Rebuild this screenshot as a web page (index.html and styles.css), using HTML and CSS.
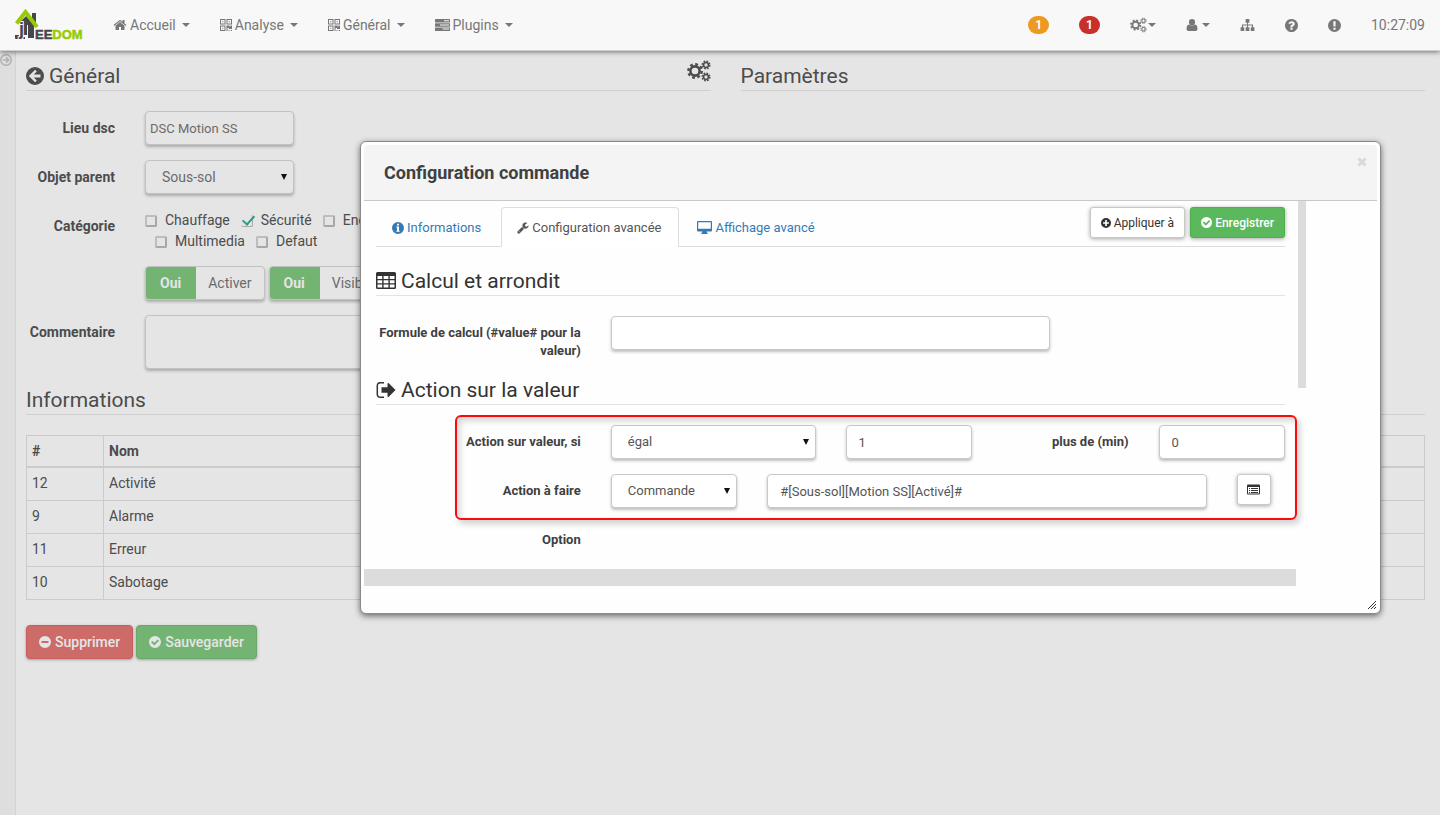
FILE: index.html
```html
<!DOCTYPE html>
<html lang="fr">
<head>
<meta charset="utf-8">
<title>Jeedom</title>
<link rel="stylesheet" href="styles.css">
</head>
<body>
<svg class="sprite" aria-hidden="true">
  <symbol id="home" viewBox="0 0 1792 1792"><path d="M1472 992v480q0 26-19 45t-45 19h-384v-384h-256v384h-384q-26 0-45-19t-19-45v-480q0-1 .5-3t.5-3l575-474 575 474q1 2 1 6zm223-69l-62 74q-8 9-21 11h-3q-13 0-21-7l-692-577-692 577q-12 8-24 7-13-2-21-11l-62-74q-8-10-7-23.500t11-21.500l719-599q32-26 76-26t76 26l244 204v-195q0-14 9-23t23-9h192q14 0 23 9t9 23v408l219 182q10 8 11 21.500t-7 23.500z"/></symbol>
  <symbol id="qrcode" viewBox="0 0 12 12"><path fill-rule="evenodd" d="M0 0h5.500v5.500H0zM1 1v3.500h3.500V1zM6.500 0H12v5.500H6.500zM7.500 1v3.500H11V1zM0 6.500h5.500V12H0zM1 7.500V11h3.500V7.500zM2.200 2.200h1.100v1.100H2.200zM8.700 2.200h1.100v1.100H8.700zM2.200 8.700h1.100v1.100H2.200zM6.500 6.500h3v1h1v-1H12v3.500H9v-1H7.500v3h-1zM8.500 11h1v1h-1zM10.800 11H12v1h-1.200z"/></symbol>
  <symbol id="server" viewBox="0 0 15 12"><path fill-rule="evenodd" d="M.5 0h14q.5 0 .5.500v2.500q0 .5-.5.500H.5Q0 3.500 0 3V.5Q0 0 .5 0zM9 1.200v1h5v-1zM.5 4.200h14q.5 0 .5.500v2.500q0 .5-.5.500H.5Q0 7.700 0 7.200V4.700q0-.5.500-.5zM5 5.400v1h9v-1zM.5 8.400h14q.5 0 .5.500v2.500q0 .5-.5.500H.5Q0 11.900 0 11.400V8.900q0-.5.500-.5zM7.500 9.600v1H14v-1z"/></symbol>
  <symbol id="cogs" viewBox="0 0 24 22"><g fill="none" stroke="currentColor"><circle cx="8" cy="11" r="4.600" stroke-width="2.600"/><circle cx="8" cy="11" r="6.700" stroke-width="2.400" stroke-dasharray="2.800 2.462"/><circle cx="19" cy="5" r="2.400" stroke-width="1.500"/><circle cx="19" cy="5" r="3.800" stroke-width="1.400" stroke-dasharray="1.700 1.284"/><circle cx="19" cy="17" r="2.400" stroke-width="1.500"/><circle cx="19" cy="17" r="3.800" stroke-width="1.400" stroke-dasharray="1.700 1.284"/></g></symbol>
  <symbol id="user" viewBox="0 0 11 12"><path d="M5.500 0a3 3 0 0 1 3 3.200a3 3.300 0 0 1-6 0A3 3 0 0 1 5.500 0zM2.500 5.600q3 2.400 6 0Q11 6 11 10q0 2-2 2H2q-2 0-2-2 0-4 2.500-4.400z"/></symbol>
  <symbol id="sitemap" viewBox="0 0 15 13"><path d="M5.500 0h4v4H8v2h5.500v3H15v4h-4V9h1.300V7H8v2h1.500v4h-4V9H7V7H2.700v2H4v4H0V9h1.500V6H7V4H5.500z"/></symbol>
  <symbol id="question" viewBox="128 128 1536 1536"><path d="M1024 1376v-192q0-14-9-23t-23-9h-192q-14 0-23 9t-9 23v192q0 14 9 23t23 9h192q14 0 23-9t9-23zm256-672q0-88-55.500-163t-138.500-116-170-41q-243 0-371 213-15 24 8 42l132 100q7 6 19 6 16 0 25-12 53-68 86-92 34-24 86-24 48 0 85.500 26t37.500 59q0 38-20 61t-68 45q-63 28-115.500 86.500t-52.500 125.500v36q0 14 9 23t23 9h192q14 0 23-9t9-23q0-19 21.500-49.500t54.500-49.500q32-18 49-28.500t46-35 44.500-48 28-60.500 12.500-81zm384 192q0 209-103 385.500t-279.500 279.500-385.500 103-385.500-103-279.500-279.500-103-385.500 103-385.500 279.500-279.500 385.500-103 385.500 103 279.500 279.500 103 385.500z"/></symbol>
  <symbol id="exclamation" viewBox="0 0 12 12"><path fill-rule="evenodd" d="M6 0a6 6 0 1 1 0 12A6 6 0 0 1 6 0zM4.900 2l.2 5h1.800l.2-5zM5 8v2h2V8z"/></symbol>
  <symbol id="info" viewBox="0 0 12 12"><path fill-rule="evenodd" d="M6 0a6 6 0 1 1 0 12A6 6 0 0 1 6 0zM5 1.700v1.700h2V1.700zM4.300 4.500v1.100H5v3.100h-.7v1.100h3.400V8.700H7V4.500z"/></symbol>
  <symbol id="back" viewBox="0 0 18 18"><path fill-rule="evenodd" d="M9 0a9 9 0 1 1 0 18A9 9 0 0 1 9 0zM2.800 9l6.300 6.300 1.700-1.700-3-3h6.700V7.400H7.800l3-3-1.700-1.700z"/></symbol>
  <symbol id="forward" viewBox="0 0 12 12"><g fill="none" stroke="currentColor" stroke-width="1.500"><circle cx="6" cy="6" r="5.200"/><path d="M2.800 6h5.500M6 3.300L8.700 6 6 8.700"/></g></symbol>
  <symbol id="plus" viewBox="0 0 12 12"><path fill-rule="evenodd" d="M6 0a6 6 0 1 1 0 12A6 6 0 0 1 6 0zM5 2.500V5H2.500v2H5v2.500h2V7h2.500V5H7V2.500z"/></symbol>
  <symbol id="minus" viewBox="0 0 12 12"><path fill-rule="evenodd" d="M6 0a6 6 0 1 1 0 12A6 6 0 0 1 6 0zM2.500 5v2h7V5z"/></symbol>
  <symbol id="check" viewBox="0 0 12 12"><path fill-rule="evenodd" d="M6 0a6 6 0 1 1 0 12A6 6 0 0 1 6 0zM2 6.200l3.300 3.300L10 4.700 8.700 3.400 5.300 6.800 3.300 4.900z"/></symbol>
  <symbol id="wrench" viewBox="64 64 1700 1728"><path d="M448 1472q0-26-19-45t-45-19-45 19-19 45 19 45 45 19 45-19 19-45zm644-420l-682 682q-37 37-90 37-52 0-91-37l-106-108q-38-36-38-90 0-53 38-91l681-681q39 98 114.500 173.500t173.500 114.500zm634-435q0 39-23 106-47 134-164.500 217.500t-258.500 83.500q-185 0-316.500-131.500t-131.500-316.500 131.500-316.500 316.500-131.500q58 0 121.500 16.500t107.500 46.500q16 11 16 28t-16 28l-293 169v224l193 107q5-3 79-48.500t135.500-81 70.500-35.500q15 0 23.500 10t8.500 25z"/></symbol>
  <symbol id="desktop" viewBox="0 0 15 13"><path fill-rule="evenodd" d="M1 0h13q1 0 1 1v8.500q0 1-1 1H9.500l.5 1.200h.7V13H4.300v-1.300H5l.5-1.200H1q-1 0-1-1V1q0-1 1-1zM1.200 1.200v6.600h12.600V1.200z"/></symbol>
  <symbol id="table" viewBox="0 0 20 18"><path fill-rule="evenodd" d="M1.500 0h17Q20 0 20 1.500v14q0 1.500-1.500 1.500h-17Q0 17 0 15.500v-14Q0 0 1.500 0zM1.500 4v3h4.700V4zM7.600 4v3h4.800V4zM13.800 4v3h4.700V4zM1.500 8.300v2.900h4.700V8.300zM7.600 8.300v2.900h4.800V8.300zM13.800 8.300v2.900h4.700V8.300zM1.500 12.500v3h4.700v-3zM7.600 12.500v3h4.800v-3zM13.800 12.500v3h4.700v-3z"/></symbol>
  <symbol id="signout" viewBox="0 0 19 16"><path d="M7.500.7H4Q.8.700.8 4v8q0 3.300 3.200 3.300h3.500" fill="none" stroke="currentColor" stroke-width="1.500"/><path d="M5 5.200h6V1.500q.5-.8 1.300-.2L19 8l-6.700 6.700q-.8.600-1.300-.2v-3.700H5z"/></symbol>
  <symbol id="listalt" viewBox="0 0 13 11"><path fill-rule="evenodd" d="M1 .5h11q1 0 1 1v8q0 1-1 1H1q-1 0-1-1v-8q0-1 1-1zM1 3v6.500h11V3z"/><path d="M2 4h1v1H2zM4 4h7v1H4zM2 6h1v1H2zM4 6h7v1H4zM2 8h1v1H2zM4 8h7v1H4z"/></symbol>
</svg>

<header class="navbar">
  <a class="brand" href="#" aria-label="Jeedom">
    <svg width="70" height="34" viewBox="0 0 70 34">
      <path d="M17 4h4v11h-4z" fill="#46464d"/>
      <path d="M5 13l6-6 8 8v14h-6V16h-1v10H5z" fill="#46464d"/>
      <path d="M0 26h4v2h6v2H1q-1 0-1-1z" fill="#46464d"/>
      <text class="logo-text logo-j" x="4" y="26">j</text>
      <path d="M1.500 14.500L10.500 3 22 18" fill="none" stroke="#96cb05" stroke-width="4"/>
      <text class="logo-text" x="20" y="30">EE<tspan class="logo-green">DOM</tspan></text>
    </svg>
  </a>
  <nav class="menu">
    <a href="#"><svg width="14" height="14"><use href="#home"/></svg> Accueil <i class="caret"></i></a>
    <a href="#"><svg width="12" height="12"><use href="#qrcode"/></svg> Analyse <i class="caret"></i></a>
    <a href="#"><svg width="12" height="12"><use href="#qrcode"/></svg> Général <i class="caret"></i></a>
    <a href="#"><svg width="15" height="12"><use href="#server"/></svg> Plugins <i class="caret"></i></a>
  </nav>
  <nav class="menu menu-right">
    <a href="#"><span class="badge badge-orange">1</span></a>
    <a href="#"><span class="badge badge-red">1</span></a>
    <a href="#" class="tight" aria-label="Réglages"><svg width="17" height="16"><use href="#cogs"/></svg><i class="caret"></i></a>
    <a href="#" aria-label="Utilisateur"><svg width="12" height="12"><use href="#user"/></svg><i class="caret"></i></a>
    <a href="#" aria-label="Plan"><svg width="15" height="12"><use href="#sitemap"/></svg></a>
    <a href="#" aria-label="Aide"><svg width="13" height="13"><use href="#question"/></svg></a>
    <a href="#" aria-label="Alerte"><svg width="13" height="13"><use href="#exclamation"/></svg></a>
    <a href="#">10:27:09</a>
  </nav>
</header>

<div class="shell">
  <aside class="rail"><svg width="12" height="12"><use href="#forward"/></svg></aside>
  <main class="page">
    <div class="columns">
      <section>
        <h2 class="legend"><svg width="18" height="18"><use href="#back"/></svg>Général<svg class="legend-cogs" width="24" height="22"><use href="#cogs"/></svg></h2>
        <form class="equip">
          <label for="lieu">Lieu dsc</label>
          <input class="field field-name" id="lieu" type="text" value="DSC Motion SS">
          <label for="parent">Objet parent</label>
          <span class="select select-parent"><select class="field" id="parent"><option>Sous-sol</option></select></span>
          <span class="form-label">Catégorie</span>
          <div class="cats">
            <div class="cat-row">
              <label><input type="checkbox">Chauffage</label>
              <label><input type="checkbox" checked>Sécurité</label>
              <label><input type="checkbox">Energie</label>
            </div>
            <div class="cat-row cat-next">
              <label><input type="checkbox">Multimedia</label>
              <label><input type="checkbox">Defaut</label>
            </div>
          </div>
          <div class="toggles">
            <button type="button" class="toggle"><b>Oui</b><span>Activer</span></button>
            <button type="button" class="toggle"><b>Oui</b><span>Visible</span></button>
          </div>
          <label for="comment">Commentaire</label>
          <textarea class="field" id="comment"></textarea>
        </form>
      </section>
      <section>
        <h2 class="legend">Paramètres</h2>
      </section>
    </div>
    <h2 class="legend">Informations</h2>
    <table class="cmds">
      <thead><tr><th class="num">#</th><th>Nom</th></tr></thead>
      <tbody>
        <tr><td>12</td><td>Activité</td></tr>
        <tr><td>9</td><td>Alarme</td></tr>
        <tr><td>11</td><td>Erreur</td></tr>
        <tr><td>10</td><td>Sabotage</td></tr>
      </tbody>
    </table>
    <div class="actions">
      <button type="button" class="btn btn-danger"><svg width="12" height="12"><use href="#minus"/></svg>Supprimer</button>
      <button type="button" class="btn btn-save"><svg width="12" height="12"><use href="#check"/></svg>Sauvegarder</button>
    </div>
  </main>
</div>

<div class="modal" role="dialog" aria-labelledby="dlg-title">
  <div class="modal-head">
    <h1 id="dlg-title">Configuration commande</h1>
    <button type="button" class="close" aria-label="Fermer"><svg width="10" height="10" viewBox="0 0 10 10"><path d="M1.500 1.500l7 7m0-7l-7 7" stroke="currentColor" stroke-width="3"/></svg></button>
  </div>
  <div class="modal-body">
    <div class="pane">
      <div class="tabs">
        <a href="#" class="tab"><svg width="12" height="12"><use href="#info"/></svg>Informations</a>
        <a href="#" class="tab active"><svg width="12" height="12"><use href="#wrench"/></svg>Configuration avancée</a>
        <a href="#" class="tab"><svg width="15" height="13"><use href="#desktop"/></svg>Affichage avancé</a>
        <span class="tab-actions">
          <button type="button" class="btn-sm"><svg width="10" height="10"><use href="#plus"/></svg>Appliquer à</button>
          <button type="button" class="btn-sm btn-ok"><svg width="11" height="11"><use href="#check"/></svg>Enregistrer</button>
        </span>
      </div>
      <h2 class="legend"><svg width="20" height="18"><use href="#table"/></svg>Calcul et arrondit</h2>
      <div class="grid grid-tall">
        <label class="c3" for="formule">Formule de calcul (#value# pour la valeur)</label>
        <input class="field c6" id="formule" type="text">
      </div>
      <h2 class="legend"><svg width="20" height="16"><use href="#signout"/></svg>Action sur la valeur</h2>
      <div class="marked">
        <div class="grid">
          <label class="c3" for="si">Action sur valeur, si</label>
          <span class="select c3"><select class="field" id="si"><option>égal</option></select></span>
          <input class="field c2" type="text" value="1" aria-label="Valeur">
          <label class="c2" for="plus-de">plus de (min)</label>
          <input class="field c2" id="plus-de" type="text" value="0">
        </div>
        <div class="grid">
          <label class="c3" for="faire">Action à faire</label>
          <span class="select c2"><select class="field" id="faire"><option>Commande</option></select></span>
          <input class="field c6" type="text" value="#[Sous-sol][Motion SS][Activé]#" aria-label="Commande">
          <button type="button" class="btn-sm btn-list" aria-label="Choisir"><svg width="13" height="11"><use href="#listalt"/></svg></button>
        </div>
      </div>
      <div class="grid"><span class="form-label c3">Option</span></div>
    </div>
    <div class="vbar"></div>
  </div>
  <div class="hbar"></div>
  <svg class="grip" width="8" height="8" viewBox="0 0 8 8"><path d="M0 8l8-8M3 8l5-5M6 8l2-2" stroke="#333"/></svg>
</div>
</body>
</html>
```
FILE: styles.css
```css
* { box-sizing: border-box; }
body {
  margin: 0;
  min-height: 100vh;
  display: flex;
  flex-direction: column;
  position: relative;
  background: #e5e5e5;
  color: #4c4c4c;
  font: 14px/20px Roboto, "Noto Sans", sans-serif;
}
button, input, select, textarea { font: inherit; color: inherit; margin: 0; }
svg { fill: currentColor; flex: none; }
.sprite { position: absolute; width: 0; height: 0; }

.navbar {
  display: flex;
  align-items: center;
  height: 51px;
  background: #f8f8f8;
  border-bottom: 1px solid #d0d0d0;
  box-shadow: 0 1px 5px rgba(0, 0, 0, .5);
  z-index: 1;
}
.brand { padding: 2px 13px 0 15px; display: flex; }
.logo-text { font: bold 13px "Liberation Sans", Arial, sans-serif; fill: #46464d; stroke: #46464d; stroke-width: 0.5px; }
.logo-j { font-size: 18px; stroke: #f8f8f8; stroke-width: 2px; paint-order: stroke; }
.logo-green { fill: #96cb05; stroke: #96cb05; }
.menu { display: flex; }
.menu-right { margin-left: auto; }
.menu a {
  display: flex;
  align-items: center;
  gap: 3px;
  padding: 0 15px;
  color: #777;
  text-decoration: none;
}
.menu a.tight { gap: 0; }
.caret {
  border: 4px solid transparent;
  border-top-color: currentColor;
  border-bottom: 0;
  margin-left: 3px;
}
.menu-right .caret { margin-left: 1px; }
.badge {
  padding: 3px 7px;
  border-radius: 10px;
  color: #fff;
  font-weight: 700;
  font-size: 12px;
  line-height: 12px;
}
.badge-orange { background: #ee9a20; }
.badge-red { background: #c9302c; }

.shell { flex: 1; display: flex; }
.rail {
  width: 16px;
  padding-top: 3px;
  background: #dedede;
  border-right: 1px solid #d2d2d2;
  color: #b0b0b0;
}
.rail svg { display: block; }
.page { flex: 1; padding: 9px 15px 20px 10px; }
.columns { display: grid; grid-template-columns: 1fr 1fr; column-gap: 30px; }

.legend {
  display: flex;
  align-items: center;
  gap: 5px;
  margin: 0 0 20px;
  padding-top: 2px;
  border-bottom: 1px solid #cfcfcf;
  font-size: 21px;
  font-weight: 400;
  line-height: 28px;
}
.legend-cogs { margin: -2px 0 8px auto; }

.equip {
  display: grid;
  grid-template-columns: 89px 1fr;
  column-gap: 30px;
  row-gap: 15px;
  align-items: start;
  margin-bottom: 15px;
}
.equip > label, .form-label, .grid label {
  text-align: right;
  font-weight: 700;
  padding-top: 7px;
}
.field {
  width: 100%;
  height: 34px;
  padding: 0 12px;
  border: 1px solid #c2c2c2;
  border-radius: 4px;
  background: transparent;
  box-shadow: 0 2px 3px rgba(0, 0, 0, .25);
  color: #6b6b6b;
  font-size: 13px;
  appearance: none;
}
.page .field { background: #e5e5e5; }
.field-name { width: 149px; padding: 0 4px; }
.select { position: relative; display: block; }
.select .field { padding-left: 16px; }
.select::after {
  content: "";
  position: absolute;
  right: 7px;
  top: 14px;
  border: 3px solid transparent;
  border-top: 6px solid #111;
  border-bottom: 0;
}
.select-parent { width: 149px; }
.select-parent .field { font-size: 14px; }
textarea.field { height: 54px; display: block; resize: none; }

.cats { height: 42px; padding-top: 1px; }
.cat-row { display: flex; gap: 11px; line-height: 21px; }
.cat-next { padding-left: 10px; }
.cat-row label { display: flex; align-items: center; gap: 8px; }
.cat-row input {
  appearance: none;
  width: 12px;
  height: 12px;
  border: 2px solid #bdbdbd;
  border-right-color: #a8a8a8;
  border-bottom-color: #a8a8a8;
  border-radius: 2px;
  position: relative;
}
.cat-row input:checked { border-width: 0 1px 1px 0; }
.cat-row input:checked::after {
  content: "";
  position: absolute;
  left: 4px;
  top: -2px;
  width: 5px;
  height: 10px;
  border: solid #279b90;
  border-width: 0 2px 2px 0;
  transform: rotate(42deg);
}
.toggles { grid-column: 2; display: flex; gap: 4px; }
.toggle {
  display: flex;
  padding: 0;
  border: 1px solid #c2c2c2;
  border-radius: 4px;
  overflow: hidden;
  background: #e5e5e5;
  box-shadow: 0 2px 3px rgba(0, 0, 0, .25);
  color: #6b6b6b;
  line-height: 32px;
}
.toggle b { padding: 0 15px 0 14px; background: #73b473; color: #e5e5e5; }
.toggle span { padding: 0 12px; }

.cmds { width: 100%; border-collapse: collapse; }
.cmds th, .cmds td { border: 1px solid #cbcbcb; padding: 5px 5px 7px; text-align: left; }
.cmds th { border-bottom-width: 2px; padding: 5px; }
.cmds .num { width: 77px; }
.actions { display: flex; gap: 3px; margin-top: 25px; }
.btn {
  display: flex;
  align-items: center;
  gap: 4px;
  height: 34px;
  padding: 0 12px;
  border: 1px solid;
  border-radius: 4px;
  box-shadow: 0 1px 3px rgba(0, 0, 0, .3);
  font-weight: 500;
}
.btn-danger { background: #cd6b68; border-color: #c75e5b; color: #e5e5e5; }
.btn-save { background: #73b473; border-color: #68aa68; color: #e5e5e5; }

.modal {
  position: absolute;
  z-index: 2;
  left: 25%;
  right: 59px;
  top: 141px;
  padding: 3px 3px 27px;
  border: 1px solid #8a8a8a;
  border-radius: 6px;
  background: #fefefe;
  box-shadow: 0 2px 6px rgba(0, 0, 0, .55);
  color: #333;
  font-size: 13px;
  line-height: 18px;
}
.modal-head {
  display: flex;
  justify-content: space-between;
  align-items: flex-start;
  padding: 16px 10px 16px 20px;
  background: #f4f4f4;
  border-bottom: 1px solid #c8c8c8;
  border-radius: 4px 4px 0 0;
}
.modal-head h1 { margin: 0; font-size: 18px; line-height: 23px; color: #404040; }
.close { padding: 0; border: 0; background: none; color: #d9d9d9; height: 10px; display: flex; margin-top: -4px; }
.modal-body { display: flex; align-items: flex-start; padding-right: 71px; }
.pane { flex: 1; padding: 6px 13px 5px 12px; }
.vbar { width: 8px; height: 187px; background: #dcdcdc; }
.hbar { height: 17px; margin-right: 81px; background: #dcdcdc; }
.grip { position: absolute; right: 4px; bottom: 4px; }
.tabs { display: flex; align-items: flex-start; gap: 2px; border-bottom: 1px solid #ddd; margin-bottom: 18px; }
.tab {
  display: flex;
  align-items: center;
  gap: 3px;
  height: 40px;
  padding: 1px 17px 0 15px;
  margin-bottom: -1px;
  border: 1px solid transparent;
  border-radius: 4px 4px 0 0;
  color: #337ab7;
  text-decoration: none;
}
.tab.active { background: #fff; border-color: #ddd #ddd #fff; color: #555; }
.tab-actions { display: flex; gap: 5px; margin-left: auto; }
.btn-sm {
  display: flex;
  align-items: center;
  justify-content: center;
  gap: 3px;
  height: 31px;
  padding: 0 10px;
  border: 1px solid #c8c8c8;
  border-radius: 3px;
  background: #fff;
  box-shadow: 0 1px 4px rgba(0, 0, 0, .35);
  color: #333;
  font-size: 12px;
}
.btn-ok { background: #5cb85c; border-color: #4cae4c; color: #fff; font-weight: 500; }
.btn-list { width: 34px; padding: 0; }
.modal .legend { border-color: #e3e3e3; }
.modal .field { background: #fff; border-color: #c9c9c9; color: #555; }
.grid {
  display: grid;
  grid-template-columns: repeat(12, minmax(0, 1fr));
  column-gap: 30px;
  align-items: start;
  margin-bottom: 15px;
}
.grid-tall { margin-bottom: 14px; }
.grid label, .grid .form-label { color: #404040; padding-top: 8px; }
.c2 { grid-column: span 2; }
.c3 { grid-column: span 3; }
.c6 { grid-column: span 6; }
.marked { position: relative; }
.marked::after {
  content: "";
  position: absolute;
  inset: -10px -12px -12px 79px;
  border: 2px solid #fb0a0a;
  border-radius: 6px;
  box-shadow: 3px 4px 6px rgba(0, 0, 0, .18), inset 3px 4px 6px rgba(0, 0, 0, .16);
  pointer-events: none;
}
```
